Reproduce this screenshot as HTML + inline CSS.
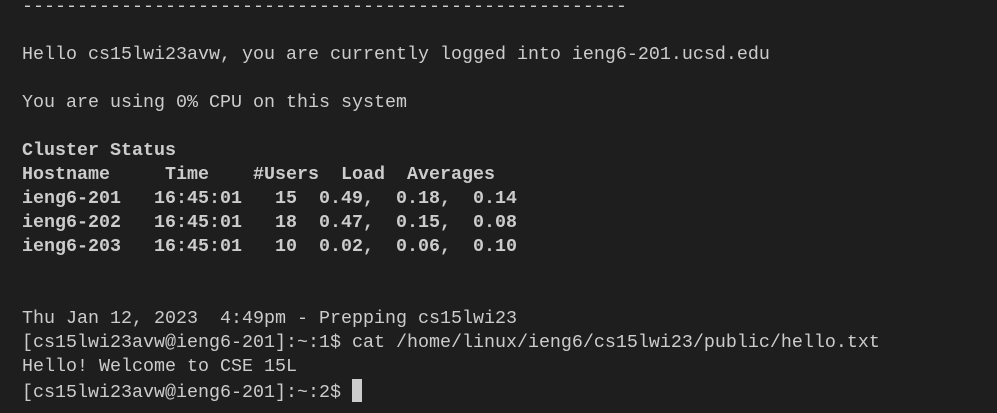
<!DOCTYPE html>
<html><head><style>
html,body{margin:0;padding:0;background:#1e1e1e;width:997px;height:413px;overflow:hidden}
pre{position:absolute;left:22px;top:-5px;margin:0;font-family:"Liberation Mono",monospace;font-size:18.33px;line-height:24px;color:#cccccc}
b{font-weight:bold}
.cur{display:inline-block;width:10px;height:23px;background:#cccccc;vertical-align:-5px}
</style></head><body>
<pre>-------------------------------------------------------

Hello cs15lwi23avw, you are currently logged into ieng6-201.ucsd.edu

You are using 0% CPU on this system

<b>Cluster Status
Hostname     Time    #Users  Load  Averages
ieng6-201   16:45:01   15  0.49,  0.18,  0.14
ieng6-202   16:45:01   18  0.47,  0.15,  0.08
ieng6-203   16:45:01   10  0.02,  0.06,  0.10</b>


Thu Jan 12, 2023  4:49pm - Prepping cs15lwi23
[cs15lwi23avw@ieng6-201]:~:1$ cat /home/linux/ieng6/cs15lwi23/public/hello.txt
Hello! Welcome to CSE 15L
[cs15lwi23avw@ieng6-201]:~:2$ <span class="cur"></span></pre>
</body></html>
